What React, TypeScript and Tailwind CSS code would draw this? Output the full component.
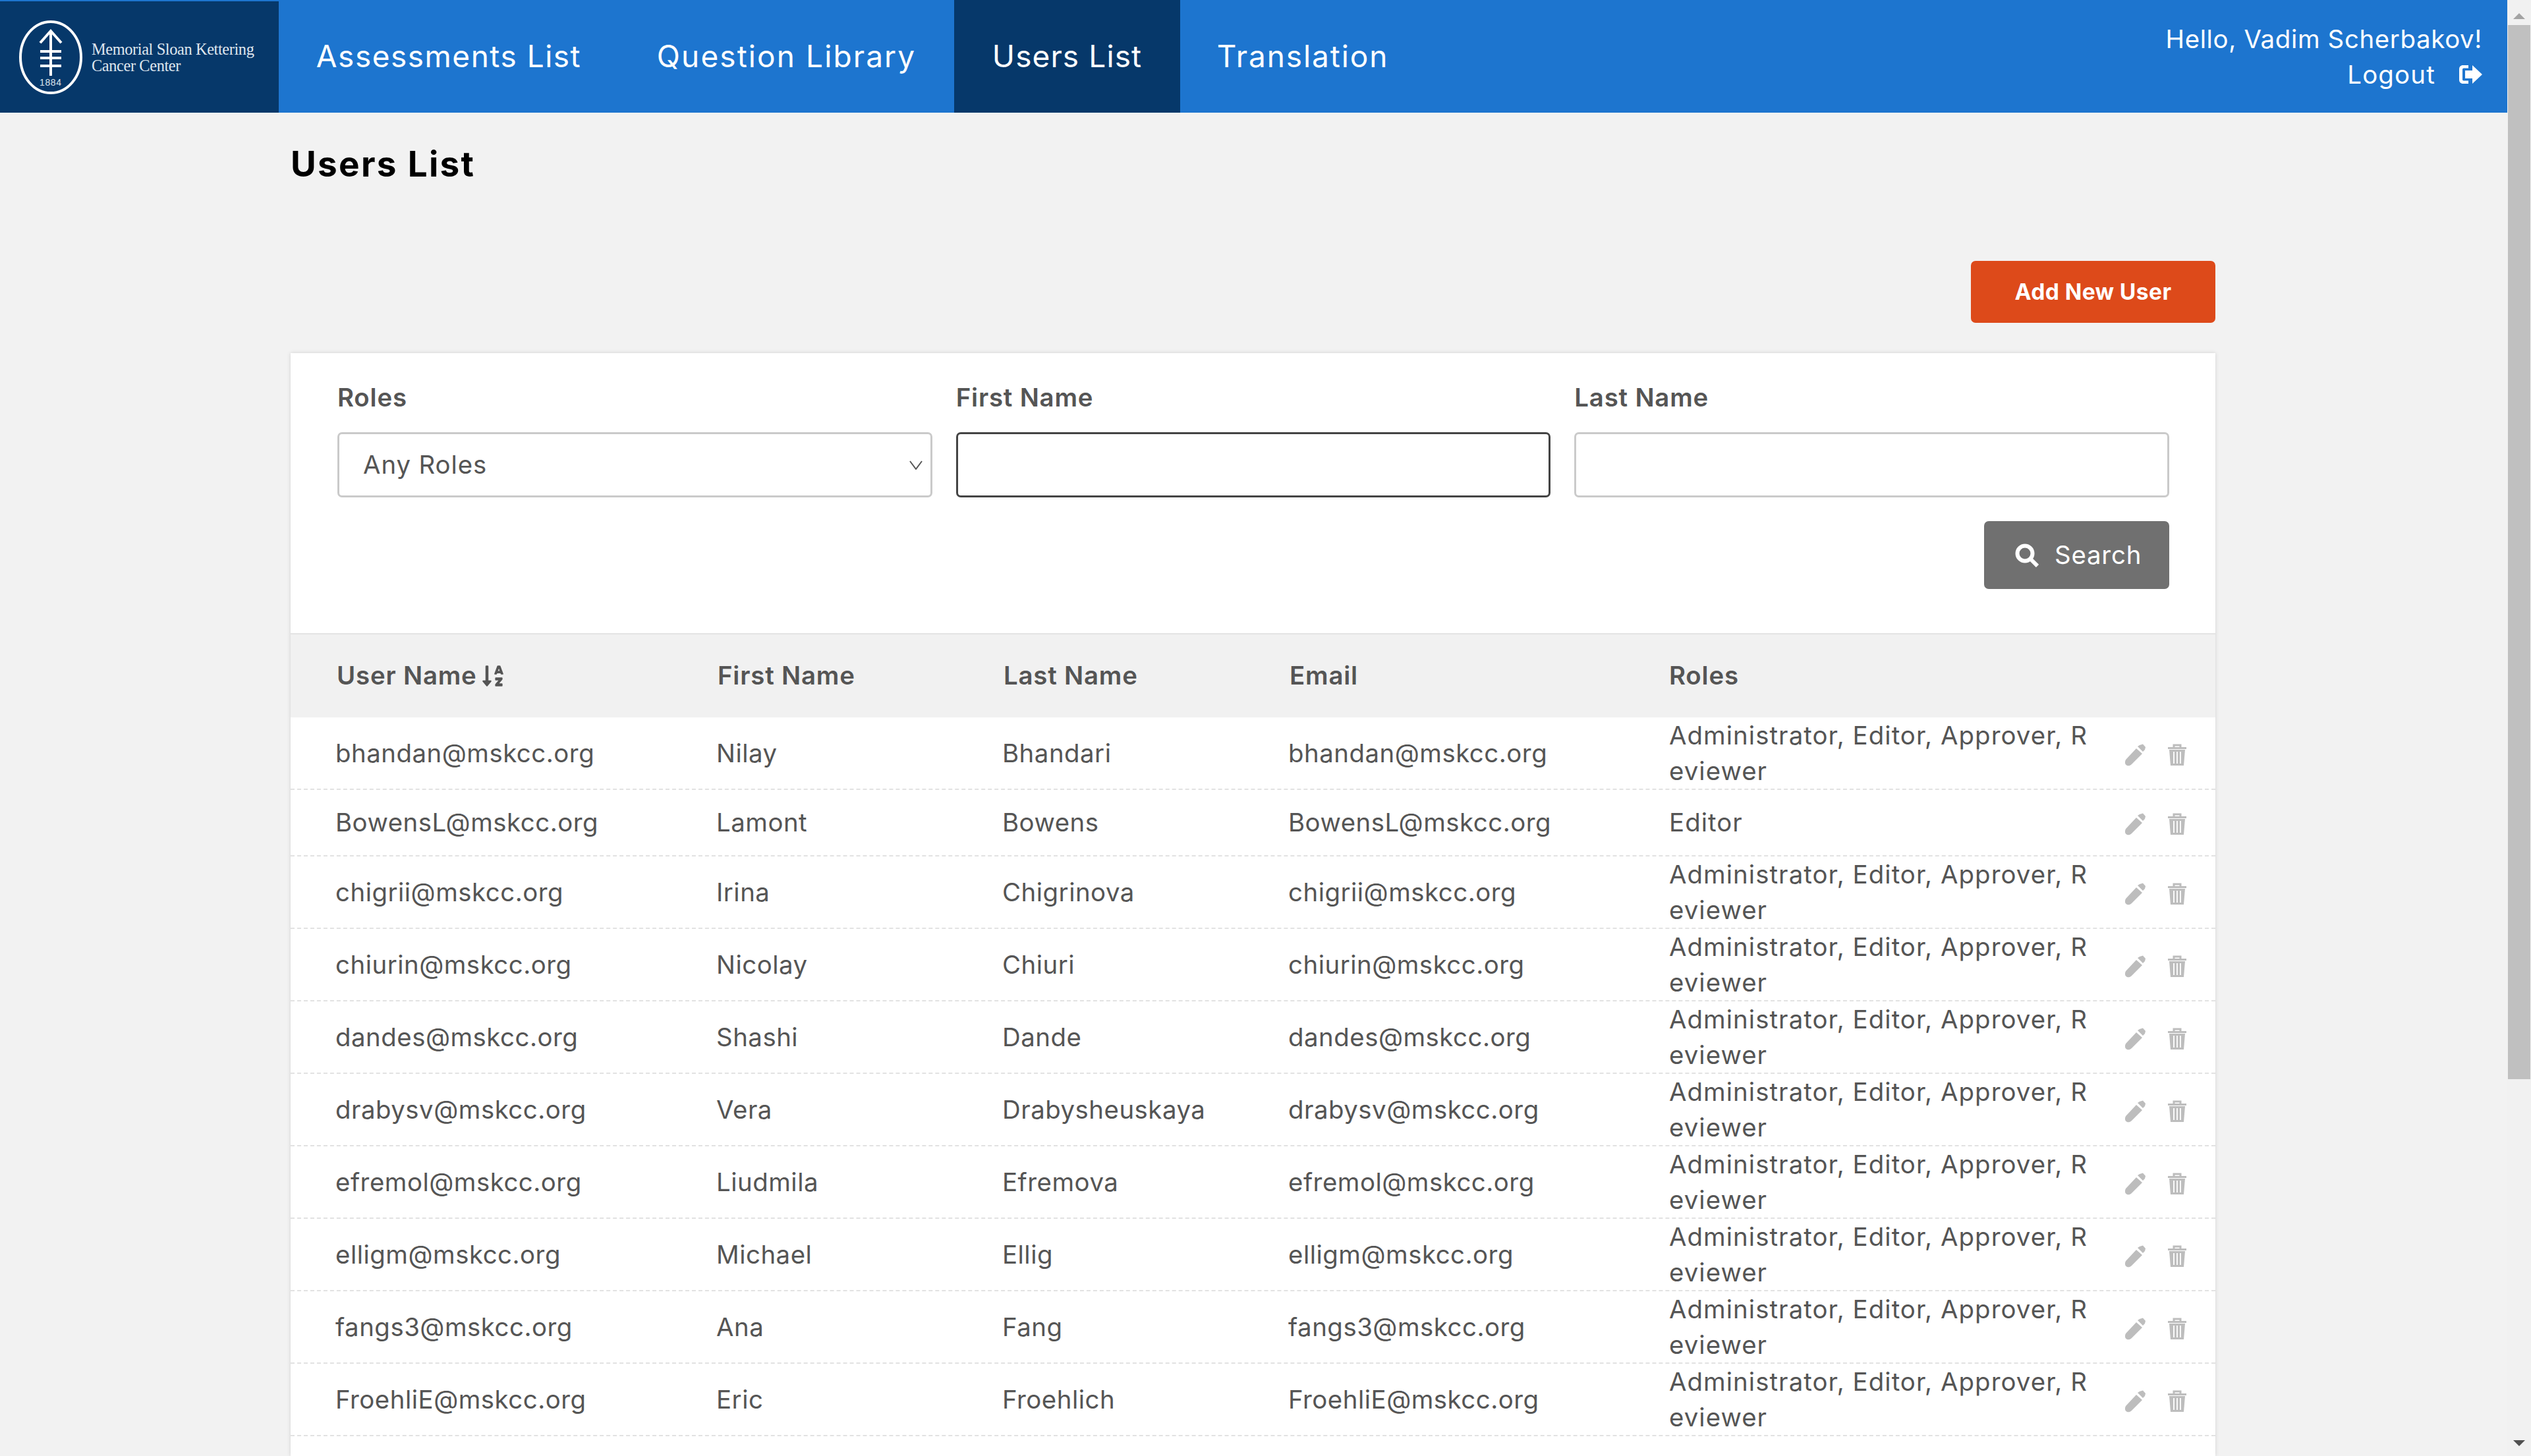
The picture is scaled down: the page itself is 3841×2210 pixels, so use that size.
import React from 'react';
import { FaSortAlphaDown } from 'react-icons/fa';

const font = "font-['Inter','Liberation_Sans',sans-serif]";

const admin = 'Administrator, Editor, Approver, Reviewer';

const users = [
  { user: 'bhandan@mskcc.org', first: 'Nilay', last: 'Bhandari', roles: admin },
  { user: 'BowensL@mskcc.org', first: 'Lamont', last: 'Bowens', roles: 'Editor' },
  { user: 'chigrii@mskcc.org', first: 'Irina', last: 'Chigrinova', roles: admin },
  { user: 'chiurin@mskcc.org', first: 'Nicolay', last: 'Chiuri', roles: admin },
  { user: 'dandes@mskcc.org', first: 'Shashi', last: 'Dande', roles: admin },
  { user: 'drabysv@mskcc.org', first: 'Vera', last: 'Drabysheuskaya', roles: admin },
  { user: 'efremol@mskcc.org', first: 'Liudmila', last: 'Efremova', roles: admin },
  { user: 'elligm@mskcc.org', first: 'Michael', last: 'Ellig', roles: admin },
  { user: 'fangs3@mskcc.org', first: 'Ana', last: 'Fang', roles: admin },
  { user: 'FroehliE@mskcc.org', first: 'Eric', last: 'Froehlich', roles: admin },
];

const cols = 'grid grid-cols-[578px_434px_434px_577px_1fr]';

const Logo = () => (
  <div className="relative mt-[2px] h-[169px] w-[423px] shrink-0 bg-[#06386a]">
    <svg className="absolute left-[28px] top-[28px] h-[114px] w-[98px]" viewBox="0 0 98 114" fill="none" stroke="white">
      <ellipse cx="49" cy="57" rx="46" ry="54" strokeWidth="4" />
      <path d="M49 17V85M33 35L49 17L65 35M33 48H65M33 58H65M33 70H65" strokeWidth="4" />
    </svg>
    <span className="absolute left-[60px] top-[113px] font-['Liberation_Sans',sans-serif] text-[14px] tracking-[0.6px] text-[#dfe6ee]">1884</span>
    <div className="absolute left-[139px] top-[60px] font-['Liberation_Serif',serif] text-[24.4px] leading-[25px] tracking-[-0.4px] text-[#dfe6ee]">
      <div>Memorial Sloan Kettering</div>
      <div>Cancer Center</div>
    </div>
  </div>
);

const NavItem = ({ label, width, spacing, active }: { label: string; width: string; spacing: string; active?: boolean }) => (
  <div className={`flex items-center justify-center text-[46px] font-normal text-white ${width} ${spacing} ${active ? 'bg-[#06386a]' : ''}`}>
    {label}
  </div>
);

const Header = () => (
  <header className="flex h-[171px] shrink-0 bg-[#1d75cf]">
    <Logo />
    <NavItem label="Assessments List" width="w-[516px]" spacing="tracking-[1.5px]" />
    <NavItem label="Question Library" width="w-[509px]" spacing="tracking-[2.1px]" />
    <NavItem label="Users List" width="w-[343px]" spacing="tracking-[1.1px]" active />
    <NavItem label="Translation" width="w-[372px]" spacing="tracking-[1.9px]" />
    <div className="ml-auto flex flex-col items-end justify-center pr-[38px] text-[38.4px] leading-[54px] tracking-[0.65px] text-white">
      <div>Hello, Vadim Scherbakov!</div>
      <div className="flex items-center gap-[36px] tracking-[1.2px]">
        Logout
        <svg className="h-[28px] w-[35px]" viewBox="0 0 35 28" fill="white">
          <path d="M14 0H6C2 0 0 2.5 0 6V22C0 25.5 2 28 6 28H14V23.5H7C5.5 23.5 5 22.5 5 21.5V6.5C5 5.5 5.5 4.5 7 4.5H14Z" />
          <path d="M20 0L35 14L20 28V20H9V8H20Z" />
        </svg>
      </div>
    </div>
  </header>
);

const Field = ({ label, children }: { label: string; children: React.ReactNode }) => (
  <div className="flex flex-1 flex-col">
    <label className="mb-[26px] text-[38.4px] font-semibold leading-[54px] tracking-[0.8px] text-[#555]">{label}</label>
    {children}
  </div>
);

const PencilIcon = () => (
  <svg className="h-[34px] w-[32px]" viewBox="0 0 32 34" fill="#bdbdbd">
    <path d="M22 2L27 0.5L31 5L30 9L27 12L19 4Z" />
    <path d="M17 7L26 15L10 31C7 34 3 34 1 31.5C-1 29 0 25 2 23Z" />
  </svg>
);

const TrashIcon = () => (
  <svg className="h-[34px] w-[28px]" viewBox="0 0 28 34" fill="none" stroke="#bdbdbd">
    <path d="M0 6.5H28M9 6V2H19V6" strokeWidth="3" />
    <path d="M2 9H26L24 33H4Z" fill="#bdbdbd" stroke="none" />
    <path d="M9 12V30M14 12V30M19 12V30" stroke="white" strokeWidth="1.8" />
  </svg>
);

const Row = ({ user, first, last, roles }: (typeof users)[number]) => (
  <div className={`${cols} items-center border-b-2 border-dashed border-[#e2e2e2] pb-[1px] text-[38.4px] leading-[54px] tracking-[0.5px] text-[#555] ${roles === admin ? 'h-[110px]' : 'h-[101px]'}`}>
    <div className="pl-[68px]">{user}</div>
    <div className="pl-[68px]">{first}</div>
    <div className="pl-[68px]">{last}</div>
    <div className="pl-[68px]">{user}</div>
    <div className="flex items-center pl-[69px]">
      <div className="w-[640px] break-all tracking-[1.05px]">{roles}</div>
      <div className="ml-[52px] flex items-center gap-[33px] pt-[6px]">
        <PencilIcon />
        <TrashIcon />
      </div>
    </div>
  </div>
);

export default function App() {
  return (
    <div className={`flex h-screen overflow-hidden bg-[#f2f2f2] ${font}`}>
      <div className="flex min-w-0 flex-1 flex-col">
        <Header />
        <main className="ml-[441px] mr-[443px] flex min-h-0 flex-1 flex-col">
          <h1 className="mt-[48px] text-[53px] font-bold leading-[60px] tracking-[2.3px] text-black">Users List</h1>
          <div className="mt-[117px] flex justify-end">
            <button className="h-[94px] w-[371px] rounded-[7px] bg-[#dd4a1a] text-[33.6px] font-bold tracking-[0.4px] text-white">Add New User</button>
          </div>
          <section className="mt-[46px] flex-1 bg-white shadow-[0_0_6px_rgba(0,0,0,0.14)]">
            <div className="h-[427px] border-b-2 border-[#e3e3e3] pl-[71px] pr-[70px] pt-[40px]">
              <div className="flex gap-[36px]">
                <Field label="Roles">
                  <div className="flex h-[99px] items-center justify-between rounded-[7px] border-[3px] border-[#cacaca] pl-[36px] pr-[12px] text-[38.4px] tracking-[0.9px] text-[#555]">
                    Any Roles
                    <svg className="h-[14px] w-[20px]" viewBox="0 0 20 14" fill="none" stroke="#555" strokeWidth="2">
                      <path d="M1 1L10 13L19 1" />
                    </svg>
                  </div>
                </Field>
                <Field label="First Name">
                  <div className="h-[99px] rounded-[7px] border-[3px] border-[#444]" />
                </Field>
                <Field label="Last Name">
                  <div className="h-[99px] rounded-[7px] border-[3px] border-[#cacaca]" />
                </Field>
              </div>
              <div className="mt-[36px] flex justify-end">
                <button className="flex h-[103px] w-[281px] items-center gap-[24px] rounded-[7px] bg-[#707070] pl-[47px] text-[38.4px] tracking-[0.8px] text-white">
                  <svg className="h-[36px] w-[36px]" viewBox="0 0 36 36" fill="none" stroke="white">
                    <circle cx="15" cy="15" r="11.5" strokeWidth="6" />
                    <path d="M23 23L34 34" strokeWidth="6" />
                  </svg>
                  Search
                </button>
              </div>
            </div>
            <div className={`${cols} h-[126px] items-center bg-[#f1f1f1] text-[38.4px] font-semibold tracking-[0.8px] text-[#555]`}>
              <div className="flex items-center gap-[8px] pl-[70px]">
                User Name
                <FaSortAlphaDown className="h-[36px] w-[32px]" />
              </div>
              <div className="pl-[70px]">First Name</div>
              <div className="pl-[70px]">Last Name</div>
              <div className="pl-[70px]">Email</div>
              <div className="pl-[69px]">Roles</div>
            </div>
            {users.map((u) => (
              <Row key={u.user} {...u} />
            ))}
          </section>
        </main>
      </div>
      <div className="relative flex w-[36px] shrink-0 flex-col items-center bg-[#f1f1f1]">
        <div className="mt-[20px] h-0 w-0 border-x-[9px] border-b-[9px] border-x-transparent border-b-[#a3a3a3]" />
        <div className="mt-[9px] h-[1600px] w-[34px] bg-[#c0c0c0]" />
        <div className="absolute bottom-[15px] h-0 w-0 border-x-[9px] border-t-[9px] border-x-transparent border-t-[#505050]" />
      </div>
    </div>
  );
}
